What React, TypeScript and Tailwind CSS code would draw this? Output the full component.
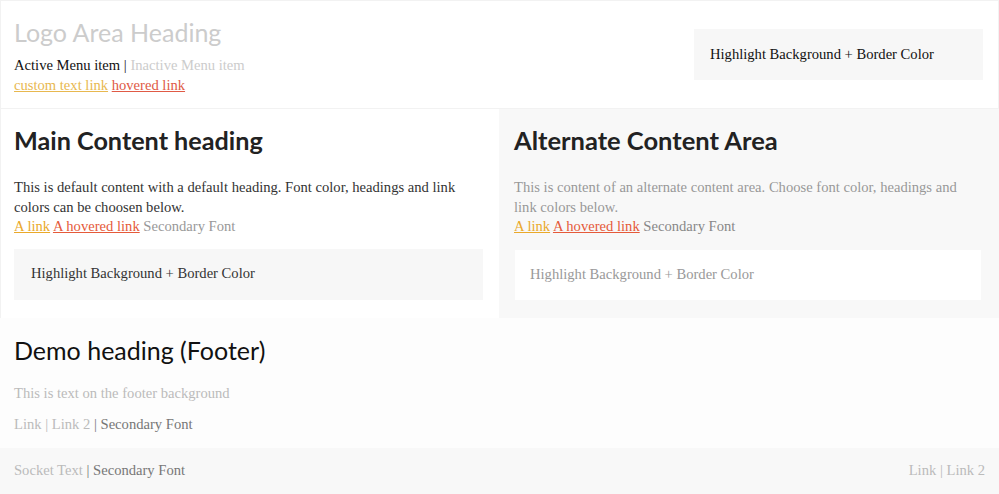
export default function App() {
  const serif = "font-['Liberation_Serif',serif]";
  const sans = "font-['Lato',sans-serif]";
  return (
    <div className={`w-[999px] h-[494px] overflow-hidden bg-white ${serif} text-[14.6px]`}>
      <header className="h-[109px] border border-[#f2f2f2] flex items-start justify-between pl-[13px] pr-[15px]">
        <div className="pt-[14px]">
          <h1 className={`${sans} text-[25px] leading-[34px] text-[#cccccc]`}>Logo Area Heading</h1>
          <div className="mt-[6px] leading-[20px] text-[#111]">
            Active Menu item <span className="text-[#222]">|</span>{" "}
            <span className="text-[#cccccc]">Inactive Menu item</span>
          </div>
          <div className="leading-[20px]">
            <a className="underline text-[#e8b84f]">custom text link</a>{" "}
            <a className="underline text-[#e05a45]">hovered link</a>
          </div>
        </div>
        <div className="mt-[28px] w-[289px] h-[51px] bg-[#f7f7f7] flex items-center pl-[16px] text-[#111]">
          Highlight Background + Border Color
        </div>
      </header>

      <div className="flex h-[209px]">
        <section className="w-[499px] border-l border-[#f2f2f2] pl-[13px] pr-[16px] pt-[16px]">
          <h2 className={`${sans} font-bold text-[25.2px] leading-[30px] text-[#222]`}>Main Content heading</h2>
          <p className="mt-[23px] leading-[19.5px] text-[#333]">
            This is default content with a default heading. Font color, headings and link colors can be choosen below.
            <br />
            <a className="underline text-[#eaa92a]">A link</a>{" "}
            <a className="underline text-[#e55a3a]">A hovered link</a>{" "}
            <span className="text-[#999]">Secondary Font</span>
          </p>
          <div className="mt-[12px] h-[51px] bg-[#f7f7f7] flex items-center pl-[17px] text-[#333]">
            Highlight Background + Border Color
          </div>
        </section>
        <section className="flex-1 bg-[#f8f8f8] pl-[15px] pr-[18px] pt-[16px]">
          <h2 className={`${sans} font-bold text-[25.5px] leading-[30px] text-[#222]`}>Alternate Content Area</h2>
          <p className="mt-[23px] leading-[19.5px] text-[#999]">
            This is content of an alternate content area. Choose font color, headings and link colors below.
            <br />
            <a className="underline text-[#eaa92a]">A link</a>{" "}
            <a className="underline text-[#e55a3a]">A hovered link</a>{" "}
            <span className="text-[#888]">Secondary Font</span>
          </p>
          <div className="mt-[13px] ml-[1px] h-[50px] bg-white flex items-center pl-[15px] text-[#999]">
            Highlight Background + Border Color
          </div>
        </section>
      </div>

      <footer className="h-[130px] bg-[#fdfdfd] pl-[14px] pt-[17px]">
        <h3 className={`${sans} text-[25px] leading-[30px] text-[#111]`}>Demo heading (Footer)</h3>
        <p className="mt-[18px] leading-[20px] text-[#bbbbbb]">This is text on the footer background</p>
        <p className="mt-[11px] leading-[20px] text-[#bbbbbb]">
          Link | Link 2 <span className="text-[#777]">| Secondary Font</span>
        </p>
      </footer>
      <div className="h-[46px] bg-[#f8f8f8] flex items-center justify-between pl-[14px] pr-[14px]">
        <span className="text-[#bbbbbb]">
          Socket Text <span className="text-[#777]">| Secondary Font</span>
        </span>
        <span className="text-[#bbbbbb]">Link | Link 2</span>
      </div>
    </div>
  );
}
